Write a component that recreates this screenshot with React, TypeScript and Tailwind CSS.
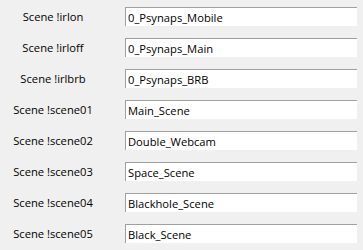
const rows = [
  { label: "Scene !irlon", value: "0_Psynaps_Mobile" },
  { label: "Scene !irloff", value: "0_Psynaps_Main" },
  { label: "Scene !irlbrb", value: "0_Psynaps_BRB" },
  { label: "Scene !scene01", value: "Main_Scene" },
  { label: "Scene !scene02", value: "Double_Webcam" },
  { label: "Scene !scene03", value: "Space_Scene" },
  { label: "Scene !scene04", value: "Blackhole_Scene" },
  { label: "Scene !scene05", value: "Black_Scene" },
];

export default function App() {
  return (
    <div
      className="w-[363px] h-[250px] bg-[#f0f0f0] pt-[7px] flex flex-col gap-[12px] text-[11.2px] text-black"
      style={{ fontFamily: '"Open Sans", "Noto Sans", sans-serif' }}
    >
      {rows.map((r) => (
        <div key={r.label} className="flex items-center h-[19px]">
          <div className="w-[106px] text-center leading-none pt-[1px]">{r.label}</div>
          <div className="ml-[19px] w-[232px] h-[19px] bg-white border-t border-l border-[#a0a0a0] flex items-center pl-[2px] pt-[1px] leading-none">
            {r.value}
          </div>
        </div>
      ))}
    </div>
  );
}
